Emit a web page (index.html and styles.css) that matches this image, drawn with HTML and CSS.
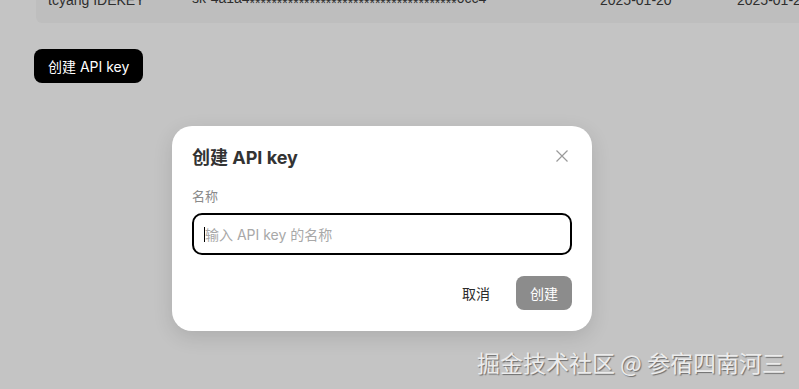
FILE: index.html
```html
<!DOCTYPE html>
<html lang="zh-CN">
<head>
  <meta charset="UTF-8">
  <title>API keys</title>
  <link rel="stylesheet" href="styles.css">
</head>
<body>

<div class="key-table">
  <div class="key-row">
    <span class="col-name">tcyang IDEKEY</span>
    <span class="col-key">sk-4a1a4<span class="mask">**************************************</span>0cc4</span>
    <span class="col-date">2025-01-20</span>
    <span class="col-date">2025-01-20</span>
  </div>
</div>

<button class="create-btn">创建 API key</button>

<div class="modal">
  <div class="modal-head">
    <h2>创建 API key</h2>
    <button class="close-btn" aria-label="关闭">
      <svg width="14" height="14" viewBox="0 0 14 14"><path d="M1.5 1.5L12.5 12.5M12.5 1.5L1.5 12.5" stroke="#9a9a9a" stroke-width="1.2" fill="none"/></svg>
    </button>
  </div>
  <label class="field-label" for="keyName">名称</label>
  <div class="field-input">
    <span class="caret"></span>
    <input id="keyName" type="text" placeholder="输入 API key 的名称">
  </div>
  <div class="modal-foot">
    <button class="cancel-btn">取消</button>
    <button class="submit-btn">创建</button>
  </div>
</div>

<div class="watermark">掘金技术社区 @ 参宿四南河三</div>

</body>
</html>
```

FILE: styles.css
```css
body {
  margin: 0;
  height: 389px;
  overflow: hidden;
  background-color: #c4c4c4;
  font-family: Inter, "Noto Sans CJK SC", sans-serif;
  color: #2b2b2b;
}

.key-table {
  margin: -14px 0 0 36px;
  height: 37px;
  background-color: #bebebe;
  border-radius: 0 0 0 6px;
  overflow: hidden;
}

.key-row {
  display: flex;
  align-items: center;
  height: 28px;
  padding-left: 12px;
  font-size: 14px;
  font-family: "Liberation Sans", "Noto Sans CJK SC", sans-serif;
  color: #2e2e2e;
  white-space: nowrap;
}

.key-row > span { flex-shrink: 0; }
.col-name { width: 144px; }
.col-key { width: 408px; }
.col-date { width: 137px; }

.mask {
  vertical-align: -5px;
}

.create-btn {
  display: block;
  margin: 26px 0 0 34px;
  height: 34px;
  padding: 0 14px;
  border: none;
  border-radius: 8px;
  background-color: #000;
  color: #fff;
  font-family: Inter, "Noto Sans CJK SC", sans-serif;
  font-size: 14px;
}

.modal {
  position: absolute;
  left: 172px;
  top: 126px;
  width: 380px;
  padding: 18px 20px 21px;
  background-color: #fff;
  border-radius: 20px;
  box-shadow: 0 6px 20px rgba(0, 0, 0, 0.12);
}

.modal-head {
  display: flex;
  justify-content: space-between;
  align-items: center;
  height: 24px;
}

.modal-head h2 {
  margin: 0;
  font-size: 18px;
  font-weight: 700;
  color: #333;
}

.close-btn {
  display: flex;
  margin-right: 3px;
  padding: 0;
  border: none;
  background: none;
}

.field-label {
  display: block;
  margin-top: 19px;
  font-size: 13px;
  line-height: 18px;
  color: #8a8a8a;
}

.field-input {
  display: flex;
  align-items: center;
  margin-top: 8px;
  height: 38px;
  padding: 0 10px;
  border: 2px solid #000;
  border-radius: 10px;
}

.caret {
  width: 1px;
  height: 15px;
  background-color: #000;
}

.field-input input {
  flex-grow: 1;
  border: none;
  outline: none;
  padding: 0;
  font-family: Inter, "Noto Sans CJK SC", sans-serif;
  font-size: 14px;
  color: #333;
}

.field-input input::placeholder {
  color: #a8a8a8;
}

.modal-foot {
  display: flex;
  justify-content: flex-end;
  align-items: center;
  margin-top: 21px;
}

.cancel-btn {
  margin-right: 14px;
  padding: 0 12px;
  border: none;
  background: none;
  font-family: Inter, "Noto Sans CJK SC", sans-serif;
  font-size: 14px;
  color: #2b2b2b;
}

.submit-btn {
  width: 56px;
  height: 34px;
  border: none;
  border-radius: 8px;
  background-color: #8c8c8c;
  color: #fff;
  font-family: Inter, "Noto Sans CJK SC", sans-serif;
  font-size: 14px;
}

.watermark {
  position: absolute;
  right: 14px;
  bottom: 13px;
  font-family: "Noto Sans CJK SC", sans-serif;
  font-size: 23px;
  line-height: 28px;
  color: #ececec;
  text-shadow: 1px 1px 1px rgba(0, 0, 0, 0.45);
}
```
